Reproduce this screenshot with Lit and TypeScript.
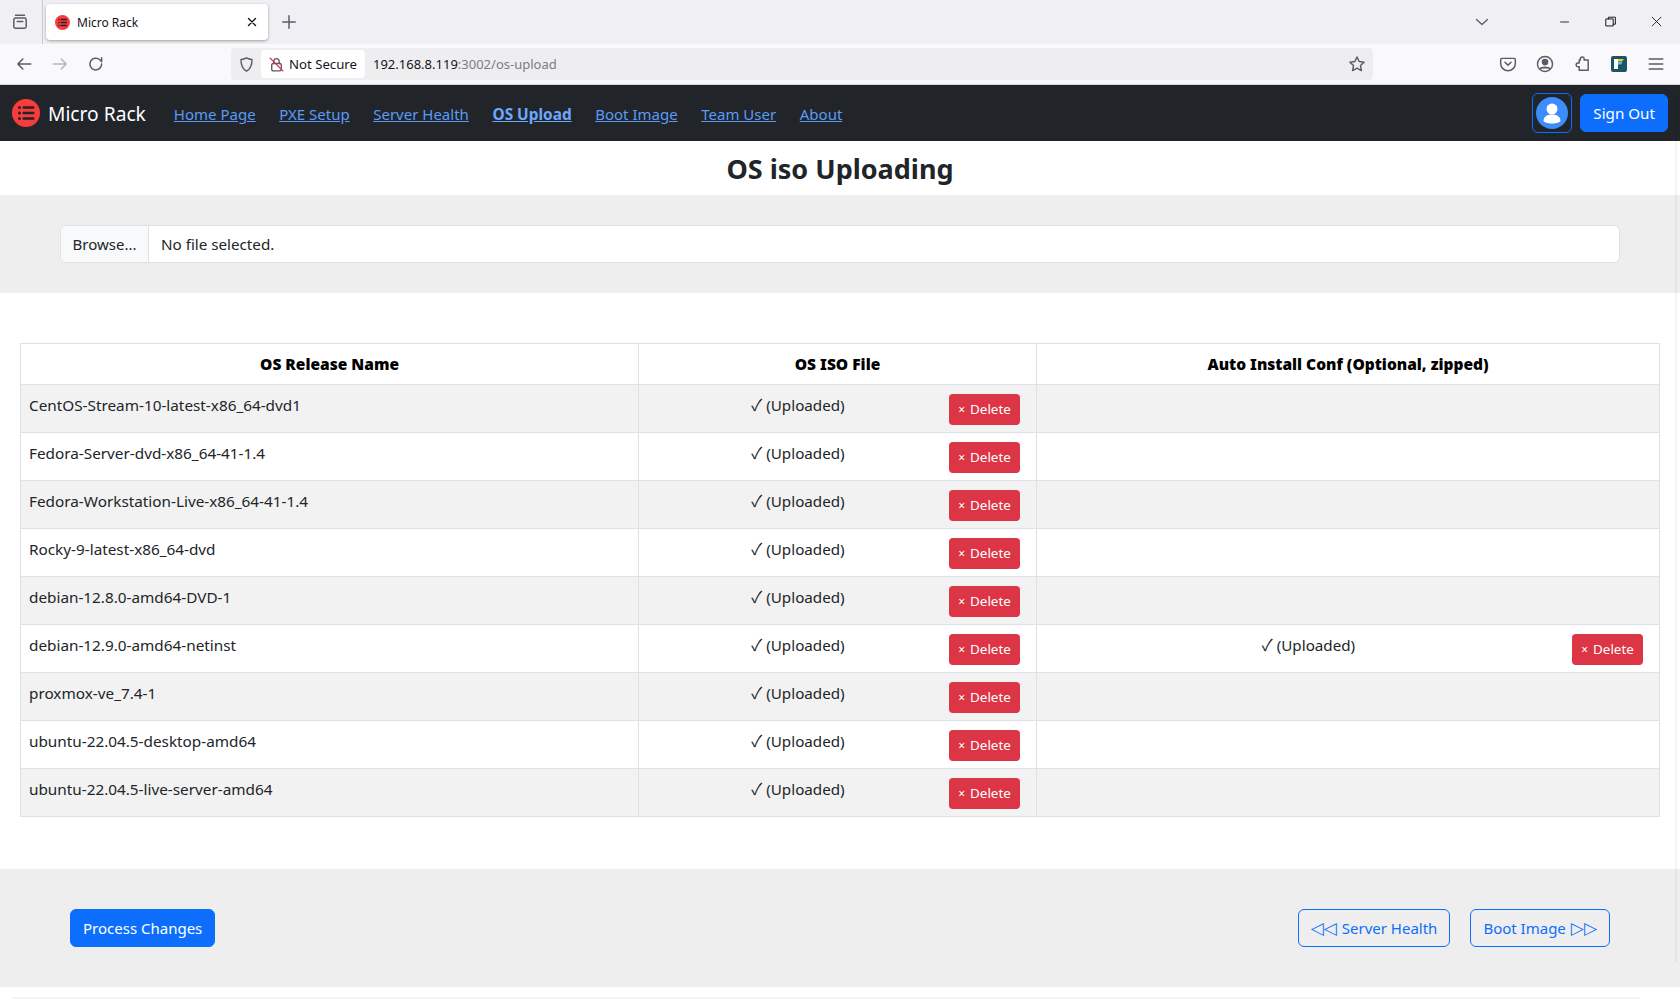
import { LitElement, html, css, svg } from "lit";
import { customElement } from "lit/decorators.js";

const rows: [string, boolean][] = [
  ["CentOS-Stream-10-latest-x86_64-dvd1", false],
  ["Fedora-Server-dvd-x86_64-41-1.4", false],
  ["Fedora-Workstation-Live-x86_64-41-1.4", false],
  ["Rocky-9-latest-x86_64-dvd", false],
  ["debian-12.8.0-amd64-DVD-1", false],
  ["debian-12.9.0-amd64-netinst", true],
  ["proxmox-ve_7.4-1", false],
  ["ubuntu-22.04.5-desktop-amd64", false],
  ["ubuntu-22.04.5-live-server-amd64", false],
];

const ic = (w: number, body: unknown, color = "#5b5b66") => html`<svg width=${w} height=${w} viewBox="0 0 16 16" fill="none" stroke=${color} stroke-width="1.3" stroke-linecap="round" stroke-linejoin="round">${body}</svg>`;

const rackIcon = (size: number) => html`<svg width=${size} height=${size} viewBox="0 0 28 28"><circle cx="14" cy="14" r="14" fill="#f83b3b"/><g fill="#212529"><circle cx="7.5" cy="8.5" r="1.5"/><circle cx="7.5" cy="14" r="1.5"/><circle cx="7.5" cy="19.5" r="1.5"/><rect x="10.5" y="7.2" width="12" height="2.6" rx="1"/><rect x="10.5" y="12.7" width="12" height="2.6" rx="1"/><rect x="10.5" y="18.2" width="12" height="2.6" rx="1"/></g></svg>`;

@customElement("app-root")
export class AppRoot extends LitElement {
  static styles = css`
    :host { display: block; height: 1002px; overflow: hidden; background: #fff; font-family: "Noto Sans", "DejaVu Sans", sans-serif; font-size: 15.2px; color: #212529; position: relative; }
    * { box-sizing: border-box; }
    .tabstrip { height: 44px; background: #f0f0f4; display: flex; align-items: flex-start; }
    .side { width: 43px; height: 44px; border-right: 1px solid #c9c9ce; display: flex; align-items: center; padding-left: 11px; }
    .tab { margin: 4px 0 0 3px; width: 222px; height: 36px; background: #fff; border-radius: 4px; box-shadow: 0 1px 3px rgba(0,0,0,.35); display: flex; align-items: center; padding: 0 9px; gap: 7px; font-size: 12px; color: #15141a; }
    .tab .title { flex: 1; }
    .tab svg { flex: none; }
    .newtab { margin: 13px 0 0 12px; display: flex; }
    .spacer { flex: 1; }
    .winbtn { display: flex; align-items: center; height: 44px; }
    .chev { margin-right: 52px; display: flex; }
    .wb { width: 46px; display: flex; justify-content: center; }
    .toolbar { height: 41px; background: #f9f9fb; border-bottom: 1px solid #d4d4d8; display: flex; align-items: center; }
    .navbtns { width: 231px; display: flex; align-items: center; padding-left: 15px; gap: 18px; }
    .url { width: 1142px; height: 32px; background: #eeeef0; border-radius: 4px; display: flex; align-items: center; padding-right: 7px; }
    .shield { width: 30px; display: flex; justify-content: center; }
    .chip { height: 28px; width: 104px; background: #fff; border-radius: 4px; display: flex; align-items: center; padding-left: 7px; gap: 4px; font-size: 13.2px; color: #15141a; white-space: nowrap; }
    .addr { flex: 1; margin-left: 8px; font-size: 13px; color: #15141a; }
    .addr span { color: #7c7c85; }
    .tools { flex: 1; display: flex; align-items: center; justify-content: flex-end; padding-right: 15px; gap: 19px; }
    .tools > * { width: 18px; display: flex; justify-content: center; }
    nav { height: 56px; background: #212529; display: flex; align-items: center; padding: 0 12px; }
    .brand { display: flex; align-items: center; gap: 8px; font-size: 19.2px; color: #fff; margin-right: 28px; white-space: nowrap; }
    .links { display: flex; gap: 23.6px; flex: 1; padding-top: 3px; font-size: 15px; }
    .links a { color: #5b9bf5; text-decoration: underline; white-space: nowrap; }
    .links a.active { font-weight: 700; color: #6ea8fe; font-size: 15.4px; }
    .avatar { width: 40px; height: 40px; border: 1px solid #0d6efd; border-radius: 6px; display: flex; align-items: center; justify-content: center; margin-right: 8px; }
    .btn { display: inline-flex; align-items: center; height: 38px; padding: 0 12px; border-radius: 6px; border: 1px solid #0d6efd; background: #0d6efd; color: #fff; white-space: nowrap; font-size: 15.2px; }
    .actions .btn { font-size: 15px; }
    .btn.outline { background: transparent; color: #0d6efd; gap: 5px; }
    .tri { font-family: "DejaVu Sans", sans-serif; font-size: 17px; line-height: 1; }
    h1 { margin: 0; height: 54px; display: flex; align-items: center; justify-content: center; font-size: 27px; font-weight: 700; color: #212529; }
    .band { background: #eee; }
    .upload { height: 98px; padding: 30px 60px 0; }
    .file { height: 38px; background: #fff; border: 1px solid #dee2e6; border-radius: 6px; display: flex; align-items: center; overflow: hidden; }
    .file b { font-weight: 400; width: 88px; height: 100%; background: #f8f9fa; border-right: 1px solid #dee2e6; display: flex; align-items: center; justify-content: center; font-size: 15px; }
    .file span { padding-left: 12px; }
    .tablewrap { padding: 50px 20px 52px; }
    table { width: 100%; border-collapse: collapse; table-layout: fixed; }
    th, td { border: 1px solid #dee2e6; padding: 8px; vertical-align: top; }
    th { height: 41px; color: #000; font-weight: 900; text-align: center; font-size: 15.5px; line-height: 24px; }
    td { height: 48px; line-height: 24px; padding-bottom: 7px; }
    td:first-child { font-size: 15.3px; }
    tbody tr:nth-child(odd) td { background: #f2f2f2; }
    .c1 { width: 618px; }
    .c2 { width: 398px; }
    .state { display: flex; align-items: flex-start; }
    .state span { flex: 1; text-align: center; }
    .state .ck { font-family: "Noto Sans CJK SC", "DejaVu Sans", sans-serif; font-size: 16px; line-height: 1; }
    .del { flex: none; margin: 1px 8px 0 0; height: 31px; width: 71px; border-radius: 4px; background: #dc3545; color: #fff; font-size: 13.4px; display: flex; align-items: center; justify-content: center; gap: 5px; line-height: 1; }
    .del i { font-style: normal; font-size: 12px; }
    .actions { height: 118px; padding: 0 70px; display: flex; align-items: center; justify-content: space-between; }
    .actions div { display: flex; gap: 20px; }
    .rule { margin: 10px 40px 0 12px; height: 2px; background: #f5f5f5; }
    .scroll { position: absolute; right: 3px; top: 97px; width: 2px; height: 865px; background: rgba(0,0,0,.04); }
  `;

  private state(up: boolean) {
    return up ? html`<div class="state"><span><span class="ck">✓</span> (Uploaded)</span><div class="del"><i>×</i>Delete</div></div>` : "";
  }

  render() {
    return html`
      <div class="tabstrip">
        <div class="side">${ic(18, svg`<rect x="2.5" y="4.5" width="11" height="9" rx="1.5"/><path d="M4 2h8M5.5 7.5h5"/>`)}</div>
        <div class="tab">${rackIcon(15)}<div class="title">Micro Rack</div>${ic(14, svg`<path d="M4 4l8 8M12 4l-8 8" stroke="#15141a" stroke-width="1.6"/>`)}</div>
        <div class="newtab">${ic(18, svg`<path d="M8 2.5v11M2.5 8h11"/>`)}</div>
        <div class="spacer"></div>
        <div class="winbtn">
          <div class="chev">${ic(16, svg`<path d="M2.5 5.5L8 10.5l5.5-5"/>`)}</div>
          <div class="wb">${ic(14, svg`<path d="M2.5 8h10" stroke="#15141a" stroke-width="1" stroke-linecap="butt"/>`)}</div>
          <div class="wb">${ic(14, svg`<rect x="2.5" y="4.5" width="8" height="8" stroke="#15141a" stroke-width="1.1"/><path d="M5 4.5V2.5h8v8h-2.5" stroke="#15141a" stroke-width="1.1"/>`)}</div>
          <div class="wb">${ic(14, svg`<path d="M2.5 2.5l10 10M12.5 2.5l-10 10" stroke="#15141a" stroke-width="1"/>`)}</div>
        </div>
      </div>
      <div class="toolbar">
        <div class="navbtns">
          ${ic(18, svg`<path d="M14 8H2.5M7 3.5L2.5 8 7 12.5"/>`)}
          ${ic(18, svg`<path d="M2 8h11.5M9 3.5L13.5 8 9 12.5"/>`, "#b4b4bb")}
          ${ic(18, svg`<path d="M13 8a5.2 5.2 0 1 1-1.6-3.7L13 6V2.5"/>`)}
        </div>
        <div class="url">
          <div class="shield">${ic(17, svg`<path d="M8 1.8c1.6 1 3.4 1.4 5.2 1.5 0 5-1 8.8-5.2 11-4.2-2.2-5.2-6-5.2-11C4.600 3.200 6.400 2.800 8 1.800z"/>`)}</div>
          <div class="chip">${ic(17, svg`<rect x="3.500" y="7" width="9" height="7" rx="1.500"/><path d="M5.500 7V5a2.500 2.500 0 0 1 5 0v2"/><path d="M2 2l12 12" stroke="#e22850"/>`)}Not Secure</div>
          <div class="addr">192.168.8.119<span>:3002/os-upload</span></div>
          ${ic(18, svg`<path d="M8 1.800l1.900 4 4.400.6-3.200 3 .8 4.400L8 11.700l-3.900 2.100.8-4.400-3.200-3 4.400-.6z"/>`)}
        </div>
        <div class="tools">
          <div>${ic(18, svg`<path d="M2.500 3h11c.6 0 1 .4 1 1v3.500a6.500 6.500 0 0 1-13 0V4c0-.6.400-1 1-1z"/><path d="M5.300 6.500L8 9l2.700-2.500"/>`)}</div>
          <div>${ic(18, svg`<circle cx="8" cy="8" r="6.700"/><circle cx="8" cy="6.300" r="2.300" fill="#5b5b66"/><path d="M3.800 12c1-1.500 7.400-1.500 8.400 0" fill="#5b5b66"/>`)}</div>
          <div>${ic(18, svg`<path d="M6.500 3.500a1.700 1.700 0 0 1 3.400 0v1h3.600v9h-8v-3h-1a1.700 1.700 0 0 1 0-3.400h1V4.500h1z"/>`)}</div>
          <div><svg width="16" height="16" viewBox="0 0 16 16"><rect width="16" height="16" rx="2" fill="#1d5566"/><path d="M3 3h4v10H3z" fill="#fff"/><path d="M7 3h6l-2 2.500H7z" fill="#f4c33e"/><path d="M7 6h4.500L10 8.500H7z" fill="#4fc3e8"/></svg></div>
          <div>${ic(18, svg`<path d="M2 3.500h12M2 8h12M2 12.500h12"/>`)}</div>
        </div>
      </div>
      <nav>
        <div class="brand">${rackIcon(28)}Micro Rack</div>
        <div class="links">
          <a>Home Page</a><a>PXE Setup</a><a>Server Health</a><a class="active">OS Upload</a><a>Boot Image</a><a>Team User</a><a>About</a>
        </div>
        <div class="avatar"><svg width="32" height="32" viewBox="0 0 32 32"><circle cx="16" cy="16" r="16" fill="#3a8dfa"/><circle cx="16" cy="12" r="5.500" fill="#fff"/><path d="M7.500 24c0-4.500 4-6.500 8.500-6.500s8.500 2 8.500 6.500c0 1-4 2.500-8.500 2.500s-8.500-1.500-8.500-2.500z" fill="#fff"/></svg></div>
        <div class="btn">Sign Out</div>
      </nav>
      <h1>OS iso Uploading</h1>
      <div class="band upload"><div class="file"><b>Browse...</b><span>No file selected.</span></div></div>
      <div class="tablewrap">
        <table>
          <colgroup><col class="c1" /><col class="c2" /><col /></colgroup>
          <thead><tr><th>OS Release Name</th><th>OS ISO File</th><th>Auto Install Conf (Optional, zipped)</th></tr></thead>
          <tbody>${rows.map(([n, conf]) => html`<tr><td>${n}</td><td>${this.state(true)}</td><td>${this.state(conf)}</td></tr>`)}</tbody>
        </table>
      </div>
      <div class="band actions">
        <span class="btn">Process Changes</span>
        <div><span class="btn outline"><span class="tri">◁◁</span>Server Health</span><span class="btn outline">Boot Image<span class="tri">▷▷</span></span></div>
      </div>
      <div class="rule"></div>
      <div class="scroll"></div>
    `;
  }
}
